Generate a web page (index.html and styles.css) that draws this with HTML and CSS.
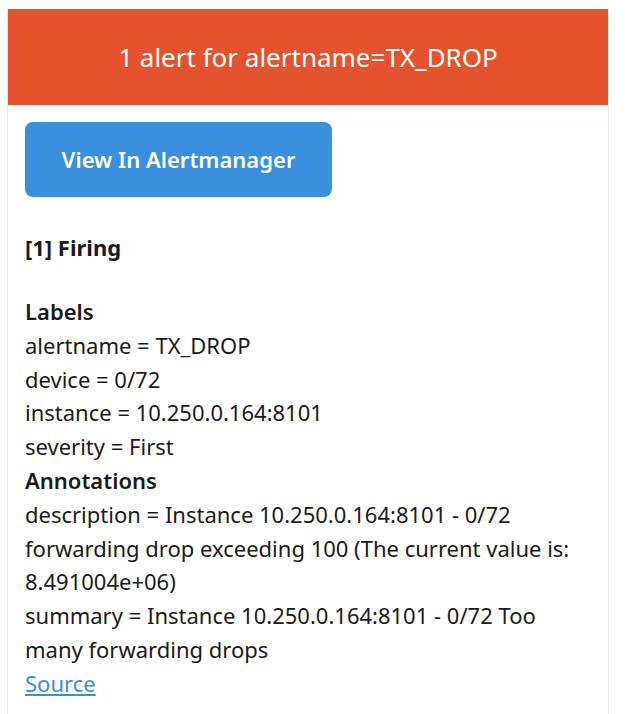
FILE: index.html
```html
<!DOCTYPE html>
<html lang="en">
<head>
    <meta charset="UTF-8">
    <meta name="viewport" content="width=device-width, initial-scale=1.0">
    <title>Alert</title>
    <link rel="stylesheet" href="styles.css">
</head>
<body>

    <div class="mail">
        <!-- Header -->
        <div class="alert-header">1 alert for alertname=TX_DROP</div>

        <div class="content">
            <a href="#" class="btn">View In Alertmanager</a>

            <div class="firing"><strong>[1] Firing</strong></div>

            <div class="alert-body">
                <strong>Labels</strong><br>
                alertname = TX_DROP<br>
                device = 0/72<br>
                instance = 10.250.0.164:8101<br>
                severity = First<br>
                <strong>Annotations</strong><br>
                description = Instance 10.250.0.164:8101 - 0/72 forwarding drop exceeding 100 (The current value is: 8.491004e+06)<br>
                summary = Instance 10.250.0.164:8101 - 0/72 Too many forwarding drops<br>
                <a href="#" class="source">Source</a>
            </div>
        </div>
    </div>

</body>
</html>
```

FILE: styles.css
```css
body {
    margin: 0;
    padding: 9px 16px 0 7px;
    background-color: #fff;
    font-family: "Noto Sans", "Open Sans", sans-serif;
    color: #1a1a1a;
}

.mail {
    border-left: 1px solid #ececec;
    border-right: 1px solid #ececec;
    min-height: 705px;
}

.alert-header {
    background-color: #e5522e;
    color: #fff;
    font-size: 26px;
    height: 96px;
    display: flex;
    align-items: center;
    justify-content: center;
}

.content {
    padding: 17px 14px 0 17px;
}

.btn {
    display: flex;
    align-items: center;
    justify-content: center;
    width: 307px;
    height: 75px;
    padding-bottom: 2px;
    box-sizing: border-box;
    background-color: #3a8fdf;
    border-radius: 8px;
    color: #fff;
    font-size: 22px;
    font-weight: 600;
    text-decoration: none;
}

.firing {
    margin-top: 33px;
    font-size: 22px;
    line-height: 34px;
}

.alert-body {
    margin-top: 31px;
    font-size: 22px;
    line-height: 33.8px;
}

.alert-body strong {
    font-weight: 600;
}

.source {
    color: #3b8ed3;
}
```
